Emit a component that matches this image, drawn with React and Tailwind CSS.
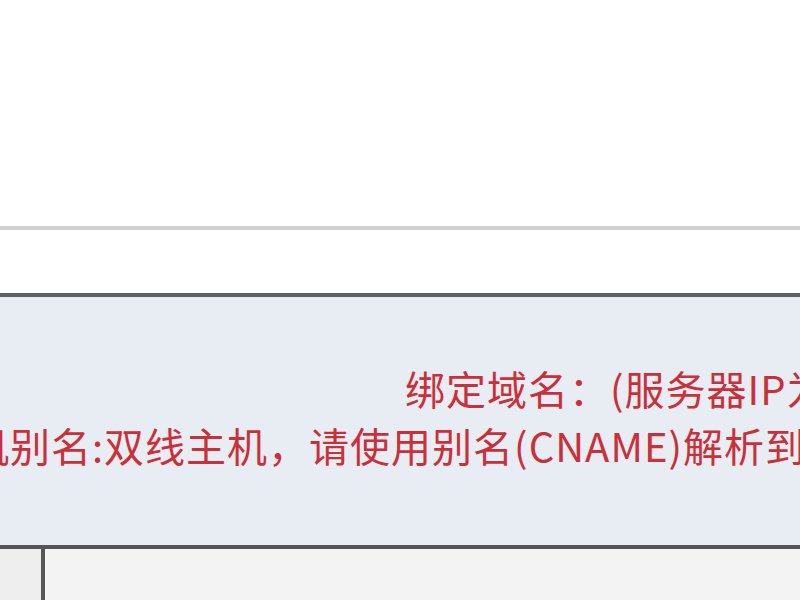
export default function App() {
  const font = { fontFamily: '"Noto Sans CJK SC", "Microsoft YaHei", sans-serif' };
  return (
    <div className="w-[800px] h-[600px] overflow-hidden bg-white flex flex-col">
      <div className="h-[226px] shrink-0 bg-white" />
      <div className="h-[4px] shrink-0 bg-[#d2d2d2]" />
      <div className="h-[63px] shrink-0 bg-white" />
      <div className="h-[4px] shrink-0 bg-[#5e5e5e]" />
      <div className="h-[248px] shrink-0 bg-[#e8ecf3] overflow-hidden flex flex-col pt-[63px]" style={font}>
        <div className="whitespace-nowrap text-[40px] leading-[57px] tracking-[1px] text-[#c9303a] pl-[405px]">
          绑定域名：(服务器IP为
        </div>
        <div className="whitespace-nowrap text-[40px] leading-[57px] tracking-[1px] text-[#c9303a] ml-[-31px]">
          机别名:双线主机，请使用别名(CNAME)解析到
        </div>
      </div>
      <div className="h-[4px] shrink-0 bg-[#555555]" />
      <div className="flex-1 flex">
        <div className="w-[41px] bg-[#eeeeee]" />
        <div className="w-[4px] bg-[#555555]" />
        <div className="flex-1 bg-[#f3f3f3]" />
      </div>
    </div>
  );
}
